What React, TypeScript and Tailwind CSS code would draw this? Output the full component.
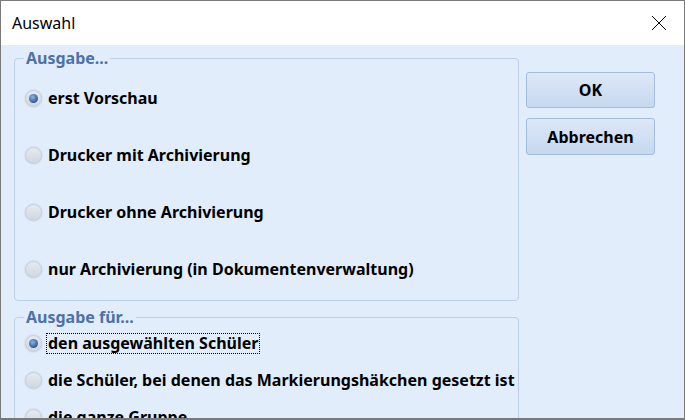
import React from 'react'

const font = { fontFamily: '"Noto Sans", "DejaVu Sans", sans-serif' }

const Radio = ({ checked }: { checked?: boolean }) => (
	<span className="flex h-[17px] w-[17px] shrink-0 items-center justify-center rounded-full border border-[#c3cedb] bg-gradient-to-b from-[#e6eaf0] to-[#d0d7e0] shadow-[0_0_2px_#b8c6d8]">
		{checked && (
			<span className="h-[9px] w-[9px] rounded-full bg-[radial-gradient(circle_at_40%_35%,#8fb2e0,#2c5b99_70%)]" />
		)}
	</span>
)

const Option = ({ label, checked, focused }: { label: string; checked?: boolean; focused?: boolean }) => (
	<div className="flex h-[22px] items-center gap-[4px]">
		<Radio checked={checked} />
		<span
			className={
				focused
					? 'border border-dotted border-black px-[1px] text-[16px] font-bold leading-[19px] text-black'
					: 'border border-transparent px-[1px] text-[16px] font-bold leading-[19px] text-black'
			}
		>
			{label}
		</span>
	</div>
)

/**
 * Auswahl dialog (print output selection).
 */
export default function App() {
	return (
		<div
			className="flex h-[420px] w-[685px] flex-col overflow-hidden border border-b-2 border-[#7a7a7a] bg-[#e2edfb]"
			style={font}
		>
			{/* Title bar */}
			<div className="flex h-[44px] shrink-0 items-center justify-between bg-white pl-[11px] pr-[17px]">
				<span className="text-[16px] text-black">Auswahl</span>
				<svg width="16" height="16" viewBox="0 0 16 16" className="text-black">
					<path d="M1 1L15 15M15 1L1 15" stroke="currentColor" strokeWidth="1" fill="none" />
				</svg>
			</div>

			{/* Body */}
			<div className="flex min-h-0 flex-1 gap-[7px] pl-[13px]">
				<div className="flex w-[505px] shrink-0 flex-col gap-[6px] pt-[3px]">
					{/* Ausgabe */}
					<fieldset className="flex h-[253px] shrink-0 flex-col gap-[35px] rounded-[4px] border border-[#bccfe6] pl-[10px] pt-[19px]">
						<legend className="-ml-[1px] px-[2px] text-[16px] font-bold leading-[20px] text-[#4d71a8]">
							Ausgabe...
						</legend>
						<Option label="erst Vorschau" checked />
						<Option label="Drucker mit Archivierung" />
						<Option label="Drucker ohne Archivierung" />
						<Option label="nur Archivierung (in Dokumentenverwaltung)" />
					</fieldset>

					{/* Ausgabe für */}
					<fieldset className="flex h-[150px] shrink-0 flex-col gap-[15px] rounded-[4px] border border-[#bccfe6] pl-[10px] pt-[5px]">
						<legend className="-ml-[1px] px-[2px] text-[16px] font-bold leading-[20px] text-[#4d71a8]">
							Ausgabe für...
						</legend>
						<Option label="den ausgewählten Schüler" checked focused />
						<Option label="die Schüler, bei denen das Markierungshäkchen gesetzt ist" />
						<Option label="die ganze Gruppe" />
					</fieldset>
				</div>

				{/* Buttons */}
				<div className="flex flex-col gap-[10px] pt-[27px]">
					<button className="h-[36px] w-[129px] rounded-[3px] border border-[#a3bcdc] bg-gradient-to-b from-[#dde8f7] to-[#c6d8ef] text-[16px] font-bold text-black">
						OK
					</button>
					<button className="h-[37px] w-[129px] rounded-[3px] border border-[#a3bcdc] bg-gradient-to-b from-[#dde8f7] to-[#c6d8ef] text-[16px] font-bold text-black">
						Abbrechen
					</button>
				</div>
			</div>
		</div>
	)
}
